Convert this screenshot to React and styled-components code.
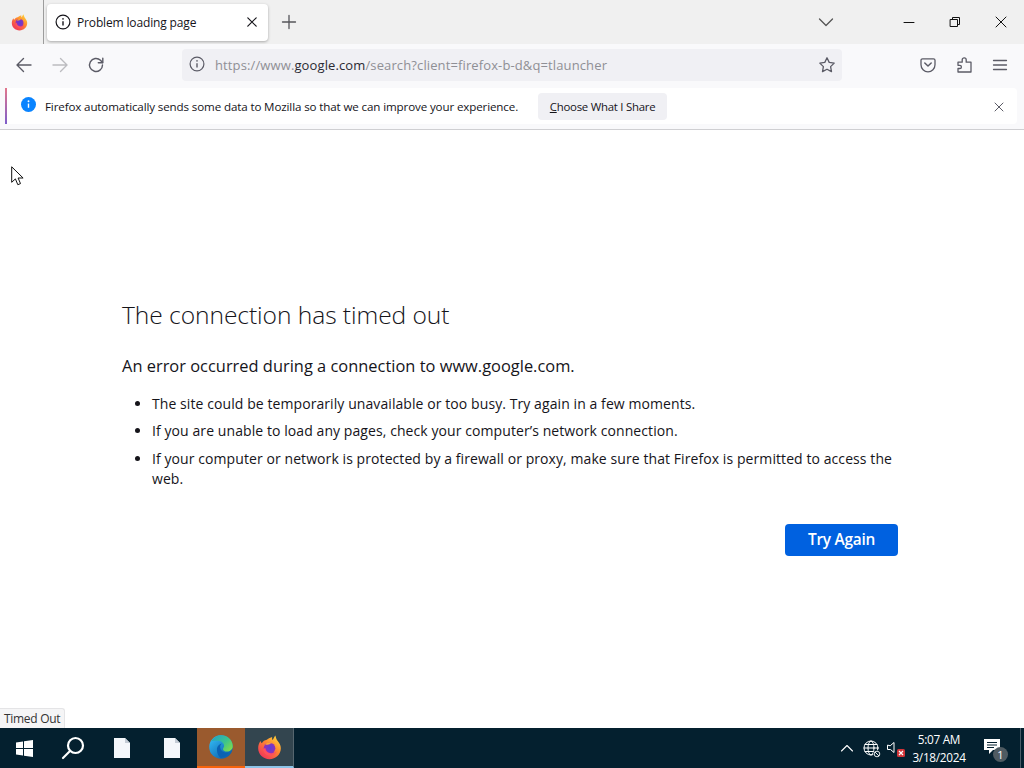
import React from 'react';
import styled, { createGlobalStyle } from 'styled-components';

const Global = createGlobalStyle`
  html, body { margin: 0; padding: 0; background: #fff; }
  body { font-family: "Open Sans", "Noto Sans", sans-serif; }
  * { box-sizing: border-box; }
`;
const Screen = styled.div`
  position: relative; width: 1024px; height: 768px; overflow: hidden;
  display: flex; flex-direction: column; background: #fff;
`;
const TabBar = styled.div`
  height: 44px; background: #f0f0f0; display: flex; align-items: center; flex: none;
`;
const AppSlot = styled.div`
  width: 44px; height: 44px; display: flex; align-items: center; justify-content: center;
  border-right: 1px solid #9c9c9c; padding-right: 5px; flex: none;
`;
const Tab = styled.div`
  margin-left: 3px; width: 221px; height: 37px; background: #fff; border-radius: 4px;
  box-shadow: 0 1px 3px rgba(0,0,0,.3); display: flex; align-items: center;
  padding: 0 10px 0 8px; gap: 6px; color: #15141a; flex: none;
`;
const TabTitle = styled.span`
  flex: 1; font-size: 12px; letter-spacing: -0.15px; white-space: nowrap;
`;
const NewTab = styled.div`
  margin-left: 13px; width: 18px; display: flex; color: #55555a; flex: none;
`;
const Spacer = styled.div`flex: 1;`;
const TabListArrow = styled.div`display: flex; margin-right: 68px; color: #555;`;
const WinButtons = styled.div`display: flex; gap: 32px; padding-right: 16px; align-items: center;`;
const WinButton = styled.div`width: 14px; height: 14px; display: flex; color: #111;`;
const NavBar = styled.div`
  height: 44px; background: #f9f9fb; display: flex; align-items: center; flex: none;
  padding: 0 0 3px 15px;
`;
const NavIcon = styled.div`
  display: flex; width: 18px; height: 18px; margin-right: ${p => p.$gap || 0}px;
  color: ${p => p.$dim ? '#bcbcc0' : '#5b5b66'}; flex: none;
`;
const UrlBar = styled.div`
  margin-left: 77px; width: 660px; height: 32px; background: #f0f0f4; border-radius: 4px;
  display: flex; align-items: center; padding: 0 6px 0 7px; flex: none;
`;
const UrlText = styled.div`
  margin-left: 8px; flex: 1; font-size: 13px; letter-spacing: 0.12px; color: #8f8f95; white-space: nowrap;
  & b { font-weight: 400; color: #2b2a33; }
`;
const NavRight = styled.div`
  margin-left: 77px; display: flex; gap: 18px; align-items: center;
`;
const NoticeWrap = styled.div`
  background: #f9f9fb; padding: 0 7px 4px 5px; flex: none;
  border-bottom: 1px solid #cfcfd2; height: 43px; margin-top: -1px;
`;
const Notice = styled.div`
  height: 36px; background: #fff; display: flex; align-items: center; position: relative;
  border-radius: 4px; padding: 1px 0 0 14px;
  border-left: 2px solid #9059ff; border-image: linear-gradient(#e5778a, #7a5ccc) 1;
  margin-top: 1px;
`;
const NoticeText = styled.span`
  margin-left: 9px; font-size: 11.6px; letter-spacing: -0.13px; color: #15141a; white-space: nowrap;
`;
const NoticeButton = styled.div`
  margin-left: 20px; width: 129px; height: 27px; background: #f0f0f4; border-radius: 4px;
  display: flex; align-items: center; justify-content: center; font-size: 11.4px; letter-spacing: -0.25px; color: #15141a;
  & u { text-underline-offset: 1px; }
`;
const NoticeClose = styled.div`
  margin-left: auto; margin-right: 12px; display: flex; color: #5b5b66;
`;
const Page = styled.div`
  flex: 1; background: #fff; padding: 0 126px 0 122px; position: relative;
`;
const Title = styled.h1`
  margin: 167px 0 0; font-size: 24.6px; font-weight: 300; line-height: 36px; letter-spacing: -0.07px; color: #15141a;
`;
const Lead = styled.p`
  margin: 21px 0 0; font-size: 16.4px; line-height: 24px; color: #15141a; letter-spacing: 0.015px;
`;
const List = styled.ul`
  margin: 16px 0 0; padding: 0 0 0 30px; color: #15141a;
`;
const Item = styled.li`
  font-size: 14px; line-height: 20px; margin-bottom: 7.3px; letter-spacing: 0.08px; &::marker { font-size: 14px; }
`;
const Actions = styled.div`
  display: flex; justify-content: flex-end; margin-top: 35px;
`;
const TryAgain = styled.div`
  width: 113px; height: 32px; background: #0061e0; color: #fff; border-radius: 4px;
  display: flex; align-items: center; justify-content: center; font-size: 15.4px; font-weight: 600; letter-spacing: -0.25px;
`;
const Cursor = styled.svg`
  position: absolute; left: 11px; top: 36px; width: 13px; height: 20px;
`;
const Status = styled.div`
  position: absolute; left: 0; bottom: 0; height: 20px; width: 65px; background: #f5f5f6;
  border: 1px solid #e4e4e6; border-width: 1px 1px 0 0; font-size: 12px; padding: 1px 0 0 4px; color: #333; white-space: nowrap;
  letter-spacing: -0.3px; border-radius: 0 3px 0 0;
`;
const Taskbar = styled.div`
  height: 40px; background: #04202f; display: flex; align-items: stretch; flex: none; color: #fff;
`;
const TaskSlot = styled.div`
  width: ${p => p.$w || 50}px; display: flex; align-items: center; justify-content: center; flex: none;
  background: ${p => p.$bg || 'transparent'};
  border-bottom: ${p => p.$line ? `2px solid ${p.$line}` : 'none'};
  border-right: ${p => p.$sep ? `1px solid ${p.$sep}` : 'none'};
`;
const Tray = styled.div`
  margin-left: auto; display: flex; align-items: center; color: #fff; position: relative;
`;
const TrayIcon = styled.div`
  display: flex; margin-right: ${p => p.$gap || 0}px; position: relative;
`;
const Clock = styled.div`
  width: 64px; margin-left: 3px; text-align: center; font-size: 11.8px; line-height: 18px; color: #fff; letter-spacing: -0.3px;
`;
const ActionCenter = styled.div`
  position: relative; margin-left: 13px; margin-right: 24px; display: flex; margin-top: -3px;
`;
const Badge = styled.div`
  position: absolute; right: -8px; bottom: -8px; width: 15px; height: 15px; border-radius: 50%;
  background: #4f5b62; color: #fff; font-size: 11px; line-height: 15px; text-align: center;
`;
const ShowDesktop = styled.div`
  position: absolute; right: 3px; top: 0; bottom: 0; width: 1px; background: #4a5c68;
`;

const Info = ({ size = 16 }) => (
  <svg width={size} height={size} viewBox="0 0 16 16" fill="none" stroke="currentColor" strokeWidth="1.2">
    <circle cx="8" cy="8" r="6.9" />
    <path d="M8 7.2v4.3" strokeWidth="1.4" />
    <circle cx="8" cy="4.9" r=".8" fill="currentColor" stroke="none" />
  </svg>
);
const FirefoxLogo = ({ size = 16, id = 'a' }) => (
  <svg width={size} height={size} viewBox="0 0 32 32">
    <defs>
      <linearGradient id={`ffo${id}`} x1="0.85" y1="0.05" x2="0.15" y2="0.95">
        <stop offset="0" stopColor="#ffd43a" />
        <stop offset=".4" stopColor="#ff8a2e" />
        <stop offset="1" stopColor="#f0305c" />
      </linearGradient>
      <radialGradient id={`ffi${id}`} cx=".55" cy=".45" r=".6">
        <stop offset="0" stopColor="#5b3fd6" />
        <stop offset="1" stopColor="#a02fae" />
      </radialGradient>
    </defs>
    <path d="M16 31C8 31 1.500 25 1.500 17c0-3.800 1.200-7 3-9.200.3 1.300.9 2.300 1.600 2.900C7.600 7.700 10 6.400 12.500 6c2.500-1.800 5-3 7-3.500-.4 1.500-.2 3 .5 4 1-1.800 2.300-4.400 3.500-6 .7 2.300 1 4.300 2.500 6.500 2.400 2.700 4.500 6.100 4.500 10C30.500 25 24 31 16 31z" fill={`url(#ffo${id})`} />
    <circle cx="16" cy="17" r="7.500" fill={`url(#ffi${id})`} />
    <path d="M7.500 18c1 5.500 5.200 8.500 9.500 8.500 4 0 7.200-2.500 8.200-6-1.700 2.300-4.500 3.300-7.500 3-3.700-.4-6.700-2.800-6.900-6.500-1.400-.2-2.600 0-3.300 1z" fill="#ff4f5e" />
    <path d="M10.500 12c2.500-2.500 7-3.500 10-1.500-2-.1-4 .5-5 1.800-1.500.2-3.500.3-5-.3z" fill="#ffa436" />
  </svg>
);
const EdgeLogo = () => (
  <svg width="26" height="26" viewBox="0 0 32 32">
    <defs>
      <linearGradient id="edg1" x1="0.1" y1="0.2" x2="0.8" y2="1">
        <stop offset="0" stopColor="#2fb3ee" />
        <stop offset="1" stopColor="#0a5ca8" />
      </linearGradient>
      <linearGradient id="edg2" x1="0" y1="0" x2="1" y2="0.8">
        <stop offset="0" stopColor="#1f9fd0" />
        <stop offset=".6" stopColor="#3cc48c" />
        <stop offset="1" stopColor="#7fdb4a" />
      </linearGradient>
    </defs>
    <circle cx="16" cy="16" r="14.500" fill="url(#edg1)" />
    <path d="M4 9C7 3.500 12 1.500 16 1.500c8 0 14.500 6 14.500 13.500 0 4-3.500 6.500-7 6.500-3 0-5.500-1.500-5-3.500.5-1.500 2-2 1-5C18.500 9.500 15 8 12 8.200 9 8.400 6 8 4 9z" fill="url(#edg2)" />
    <path d="M11 19c0-4 3-7 6-7-3 2-2.500 7 1 9.500 2.500 1.700 5.500 1.800 8 1-2.500 4-6 6.500-10 7-3-1.500-5-6-5-10.500z" fill="#0a62b4" />
  </svg>
);

const P = ({ s = 16, children, w = 1.3, vb = '0 0 16 16' }) => (
  <svg width={s} height={s} viewBox={vb} fill="none" stroke="currentColor" strokeWidth={w} strokeLinecap="round" strokeLinejoin="round">{children}</svg>
);

export default function App() {
  return (
    <Screen>
      <Global />
      <TabBar>
        <AppSlot><FirefoxLogo size={17} id="a" /></AppSlot>
        <Tab>
          <Info />
          <TabTitle>Problem loading page</TabTitle>
          <P s={12} vb="0 0 12 12" w={1.2}><path d="M1.800 1.800l8.400 8.400M10.200 1.800l-8.400 8.400" /></P>
        </Tab>
        <NewTab><P s={16} w={1.3}><path d="M8 1.500v13M1.500 8h13" /></P></NewTab>
        <Spacer />
        <TabListArrow><P s={16} w={1.3}><path d="M1.500 5l6.500 6.500L14.500 5" /></P></TabListArrow>
        <WinButtons>
          <WinButton><P s={14} vb="0 0 14 14" w={1}><path d="M2 7.500h10" /></P></WinButton>
          <WinButton><P s={14} vb="0 0 14 14" w={1}><rect x="2.500" y="4.500" width="7" height="7" /><path d="M4.500 4.500v-2h7v7h-2" /></P></WinButton>
          <WinButton><P s={14} vb="0 0 14 14" w={1}><path d="M2 2l10 10M12 2L2 12" /></P></WinButton>
        </WinButtons>
      </TabBar>
      <NavBar>
        <NavIcon $gap={18}><P s={18} vb="0 0 18 18" w={1.4}><path d="M16 9H2.500M8.500 2.500L2 9l6.500 6.500" /></P></NavIcon>
        <NavIcon $dim $gap={18}><P s={18} vb="0 0 18 18" w={1.4}><path d="M2 9h13.500M9.500 2.500L16 9l-6.500 6.500" /></P></NavIcon>
        <NavIcon><P s={18} vb="0 0 18 18" w={1.4}><path d="M15.500 9a6.500 6.500 0 1 1-2-4.700L15.500 6.500" /><path d="M15.800 2.200v4.500h-4.500" /></P></NavIcon>
        <UrlBar>
          <NavIcon><Info size={16} /></NavIcon>
          <UrlText>https://www.<b>google.com</b>/search?client=firefox-b-d&amp;q=tlauncher</UrlText>
          <NavIcon><P s={18} vb="0 0 18 18" w={1.3}><path d="M9 1.800l2.200 4.600 5 .7-3.600 3.500.9 5L9 13.200l-4.500 2.400.9-5L1.800 7.100l5-.7z" /></P></NavIcon>
        </UrlBar>
        <NavRight>
          <NavIcon><P s={18} vb="0 0 18 18" w={1.3}><path d="M3.500 2.800h11a1.500 1.500 0 0 1 1.500 1.500v4.500a7 7 0 0 1-14 0V4.300a1.500 1.500 0 0 1 1.500-1.500z" /><path d="M5.800 7L9 10l3.200-3" strokeWidth="1.500" /></P></NavIcon>
          <NavIcon><P s={18} vb="0 0 18 18" w={1.3}><path d="M3 6.200h4.200V3.800a2 2 0 0 1 4 0v2.400H16v9.800H3v-3.500h1.800a1.600 1.600 0 0 0 0-3.200H3z" /></P></NavIcon>
          <NavIcon><P s={18} vb="0 0 18 18" w={1.3}><path d="M2.500 4.500h13M2.500 9h13M2.500 13.500h13" /></P></NavIcon>
        </NavRight>
      </NavBar>
      <NoticeWrap>
        <Notice>
          <svg width="15" height="15" viewBox="0 0 16 16" style={{ marginTop: -5 }}>
            <circle cx="8" cy="8" r="8" fill="#0a84ff" />
            <path d="M8 7v4.500" stroke="#fff" strokeWidth="1.500" />
            <circle cx="8" cy="4.500" r="1" fill="#fff" />
          </svg>
          <NoticeText>Firefox automatically sends some data to Mozilla so that we can improve your experience.</NoticeText>
          <NoticeButton><span><u>C</u>hoose What I Share</span></NoticeButton>
          <NoticeClose><P s={12} vb="0 0 12 12" w={1}><path d="M2 2l8 8M10 2l-8 8" /></P></NoticeClose>
        </Notice>
      </NoticeWrap>
      <Page>
        <Cursor viewBox="0 0 13 20">
          <path d="M.7.800v15.500l3.700-3.400 2.400 5.800 2.700-1.100-2.400-5.600h5z" fill="#fff" stroke="#111" strokeWidth="1" strokeLinejoin="miter" />
        </Cursor>
        <Title>The connection has timed out</Title>
        <Lead>An error occurred during a connection to www.google.com.</Lead>
        <List>
          <Item>The site could be temporarily unavailable or too busy. Try again in a few moments.</Item>
          <Item>If you are unable to load any pages, check your computer’s network connection.</Item>
          <Item>If your computer or network is protected by a firewall or proxy, make sure that Firefox is permitted to access the web.</Item>
        </List>
        <Actions><TryAgain>Try Again</TryAgain></Actions>
        <Status>Timed Out</Status>
      </Page>
      <Taskbar>
        <TaskSlot $w={48}>
          <svg width="17" height="17" viewBox="0 0 17 17" fill="#fff">
            <path d="M0 2.400 7 1.400v6.600H0zM8 1.300 17 0v8H8zM0 9h7v6.600l-7-1zM8 9h9v8l-9-1.300z" />
          </svg>
        </TaskSlot>
        <TaskSlot $w={49}>
          <svg width="24" height="24" viewBox="0 0 24 24" fill="none" stroke="#fff" strokeWidth="2.200">
            <circle cx="14.500" cy="9.500" r="7.500" />
            <path d="M9 15l-7 7" strokeLinecap="round" />
          </svg>
        </TaskSlot>
        <TaskSlot $w={50}>
          <svg width="16" height="20" viewBox="0 0 16 20"><path d="M0 0h11l5 5v15H0z" fill="#f4f7fb" /><path d="M11 0l5 5h-5z" fill="#c4ccd6" /></svg>
        </TaskSlot>
        <TaskSlot $w={50}>
          <svg width="16" height="20" viewBox="0 0 16 20"><path d="M0 0h11l5 5v15H0z" fill="#f4f7fb" /><path d="M11 0l5 5h-5z" fill="#c4ccd6" /></svg>
        </TaskSlot>
        <TaskSlot $w={48} $bg="#9a5a2e" $line="#f7630c"><EdgeLogo /></TaskSlot>
        <TaskSlot $w={49} $bg="#33454f" $line="#8cc4e8" $sep="#56666f"><FirefoxLogo size={25} id="b" /></TaskSlot>
        <Tray>
          <TrayIcon $gap={9}><P s={14} vb="0 0 14 14" w={1.1}><path d="M1.500 10l5.500-5.500 5.500 5.500" /></P></TrayIcon>
          <TrayIcon $gap={6}>
            <P s={17} vb="0 0 17 17" w={1}>
              <circle cx="8" cy="8" r="7" /><ellipse cx="8" cy="8" rx="3" ry="7" /><path d="M1 8h14M2 4.500h12M2 11.500h12" />
            </P>
            <svg width="8" height="8" viewBox="0 0 8 8" style={{ position: 'absolute', right: -1, bottom: -1 }}>
              <circle cx="4" cy="4" r="3.800" fill="#04202f" />
              <circle cx="4" cy="4" r="2.800" fill="none" stroke="#fff" strokeWidth=".9" />
              <path d="M2 2l4 4" stroke="#fff" strokeWidth=".9" />
            </svg>
          </TrayIcon>
          <TrayIcon>
            <P s={18} vb="0 0 18 18" w={1}><path d="M1.500 6.500v4h3l3.500 3v-10l-3.500 3z" /></P>
            <svg width="8" height="8" viewBox="0 0 8 8" style={{ position: 'absolute', right: -1, bottom: 0 }}>
              <rect width="8" height="8" rx="1.500" fill="#d13438" /><path d="M2 2l4 4M6 2l-4 4" stroke="#fff" strokeWidth="1.200" />
            </svg>
          </TrayIcon>
          <Clock>5:07 AM<br />3/18/2024</Clock>
          <ActionCenter>
            <svg width="16" height="15" viewBox="0 0 16 15"><path d="M0 0h16v11H9l-4 4v-4H0z" fill="#fff" /><path d="M3 3.500h10M3 6h10M3 8.500h7" stroke="#04202f" /></svg>
            <Badge>1</Badge>
          </ActionCenter>
          <ShowDesktop />
        </Tray>
      </Taskbar>
    </Screen>
  );
}
